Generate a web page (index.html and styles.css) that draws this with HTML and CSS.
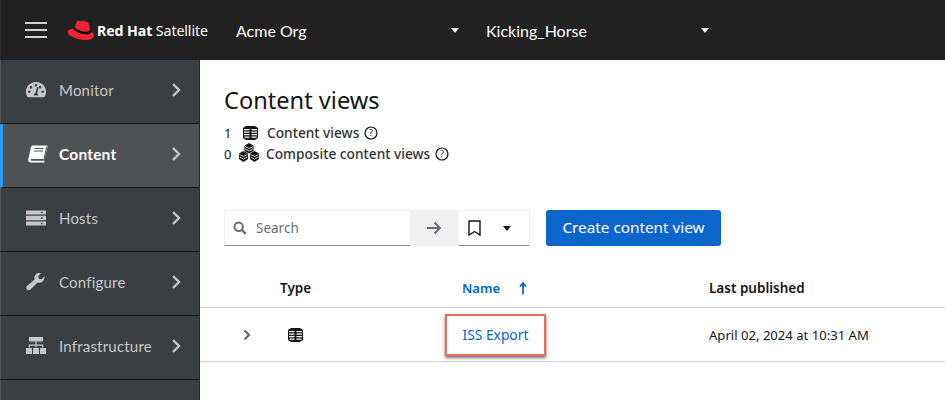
FILE: index.html
```html
<!DOCTYPE html>
<html lang="en">
<head>
    <meta charset="UTF-8">
    <title>Content views</title>
    <link rel="stylesheet" href="styles.css">
</head>
<body>
    <header class="topbar">
        <div class="burger"><span></span><span></span><span></span></div>
        <div class="logo">
            <svg class="logo-hat" width="27" height="20" viewBox="0 0 27 20">
                <path fill="#ee2436" d="M6.500 8.500C3 9 .5 10 .5 12 .5 15.500 10 20 18 20c6 0 9-2 9-4.500 0-2-2-3.500-3.500-4 .3 1.500-.5 3-3.500 3-6 0-12-3.500-13.500-6z"/>
                <path fill="#ee2436" d="M7.500 7.500l2-5C10 1 11 .5 12.500 1L14 1.500c1.500-1 3-1 5 0 2 .8 2.500 1.500 3 3.500l1 4.500c0 1.500-2 2-4 2-5 0-10-2-11.500-4z"/>
                <path fill="none" stroke="#000" stroke-width="1.800" d="M7 8c1.500 2.500 7 5.300 13 5.400 2.500 0 3.500-1.200 3.300-3"/>
            </svg>
            <span class="logo-text"><b>Red Hat</b> Satellite</span>
        </div>
        <div class="context org"><span>Acme Org</span><i class="caret"></i></div>
        <div class="context loc"><span>Kicking_Horse</span><i class="caret"></i></div>
    </header>

    <div class="layout">
        <nav class="sidebar">
            <a class="nav-item">
                <svg class="nav-icon" viewBox="0 0 20 18"><path fill="#c7c7c7" fill-rule="evenodd" d="M10 1C4.500 1 0 5.400 0 10.800c0 1.800.5 3.500 1.400 5 .2.300.5.400.8.400h15.600c.3 0 .6-.1.800-.4.900-1.500 1.400-3.200 1.400-5C20 5.400 15.500 1 10 1zM10 3a1.300 1.300 0 1 1 0 2.600A1.300 1.300 0 0 1 10 3zM3.300 12.100a1.300 1.300 0 1 1 0-2.600 1.300 1.300 0 0 1 0 2.600zM5 7.700a1.300 1.300 0 1 1 0-2.600 1.300 1.300 0 0 1 0 2.600zM12 14.500H8a2 2 0 0 1 1.400-2.400l1.600-5.600c.1-.5.600-.7 1-.6.500.1.700.6.600 1l-1.500 5.200c.6.500 1 1.400.9 2.400zM13.400 7.300a1.300 1.300 0 1 1 1.800-1.800 1.300 1.300 0 0 1-1.800 1.800zM16.700 12.100a1.300 1.300 0 1 1 0-2.600 1.300 1.300 0 0 1 0 2.600z"/></svg>
                <span class="nav-label">Monitor</span>
                <svg class="nav-arrow" viewBox="0 0 10 16"><path d="M2 2l6 6-6 6" fill="none" stroke="#c7c7c7" stroke-width="2.400"/></svg>
            </a>
            <a class="nav-item active">
                <svg class="nav-icon" viewBox="0 0 20 18"><path fill="#fff" d="M5 .5h13.500c.8 0 1.200.6 1 1.300l-2.700 11c-.2.800-.6 1.200-1.300 1.200H3.800c-1.400 0-1.400 1.800 0 1.800h12.700l-.2 1.700H2.800C.9 17.500-.1 16.300.2 14.800L3 2C3.300 1 4 .5 5 .5z"/><path fill="none" stroke="#4f5255" d="M6.500 3.500h9M6 6h9M18.800 1.500l-2.700 12"/></svg>
                <span class="nav-label">Content</span>
                <svg class="nav-arrow" viewBox="0 0 10 16"><path d="M2 2l6 6-6 6" fill="none" stroke="#c7c7c7" stroke-width="2.400"/></svg>
            </a>
            <a class="nav-item">
                <svg class="nav-icon" viewBox="0 0 20 18"><path fill="#c7c7c7" fill-rule="evenodd" d="M0 1.500h20v4H0zM15 2.800h1.500v1.400H15zM0 6.800h20v4.400H0zM15 8.300h1.500v1.400H15zM0 12.500h20v4H0zM15 13.800h1.500v1.400H15z"/></svg>
                <span class="nav-label">Hosts</span>
                <svg class="nav-arrow" viewBox="0 0 10 16"><path d="M2 2l6 6-6 6" fill="none" stroke="#c7c7c7" stroke-width="2.400"/></svg>
            </a>
            <a class="nav-item">
                <svg class="nav-icon" viewBox="0 0 20 18"><path fill="#c7c7c7" d="M18.500 3.200l-3 3-2.700-.5-.5-2.700 3-3c-2-.6-4.200 0-5.500 1.400-1.400 1.400-1.800 3.300-1.200 5.100L1 13.100c-1 1-1 2.500 0 3.500s2.500 1 3.500 0l7-7c1.800.6 3.800.1 5.200-1.200 1.400-1.400 1.900-3.400 1.800-5.200z"/></svg>
                <span class="nav-label">Configure</span>
                <svg class="nav-arrow" viewBox="0 0 10 16"><path d="M2 2l6 6-6 6" fill="none" stroke="#c7c7c7" stroke-width="2.400"/></svg>
            </a>
            <a class="nav-item">
                <svg class="nav-icon" viewBox="0 0 20 18"><path fill="#c7c7c7" d="M3 0h14v4.500H3zM9.400 4.500h1.200v3h6.600v3H16V8.700h-5.400v1.800H9.400V8.700H4v1.800H2.800v-3h6.600zM0 11h6v6H0zM7 11h6v6H7zM14 11h6v6h-6z"/></svg>
                <span class="nav-label">Infrastructure</span>
                <svg class="nav-arrow" viewBox="0 0 10 16"><path d="M2 2l6 6-6 6" fill="none" stroke="#c7c7c7" stroke-width="2.400"/></svg>
            </a>
        </nav>

        <main class="content">
            <h1>Content views</h1>
            <div class="stats">
                <div class="stat">
                    <span class="stat-num">1</span>
                    <svg class="stat-icon" width="15" height="14" viewBox="0 0 15 14"><path fill="#151515" fill-rule="evenodd" d="M3 0h9l3 2v10l-3 2H3l-3-2V2zM1 3v1.200h5.500V3zM8.500 3v1.200H14V3zM1 5.500v1.200h5.500V5.500zM8.500 5.500v1.200H14V5.500zM1 8v1.200h5.500V8zM8.500 8v1.200H14V8zM1.500 10.500v1.200h5v-1.200zM8.500 10.500v1.200h5v-1.200z"/></svg>
                    <span class="stat-label">Content views</span>
                    <svg class="help" width="14" height="14" viewBox="0 0 14 14"><circle cx="7" cy="7" r="6" fill="none" stroke="#151515" stroke-width="1.200"/><text x="7" y="10.300" text-anchor="middle" class="help-mark">?</text></svg>
                </div>
                <div class="stat">
                    <span class="stat-num">0</span>
                    <svg class="stat-icon" width="22" height="21" viewBox="0 0 22 21"><path fill="#151515" d="M6.500 2.500L11 0l4.500 2.500v5.500L11 10.500 6.500 8zM1 10.500L5.500 8 10 10.500V16l-4.500 3L1 16zM12 10.500L16.500 8l4.500 2.500V16l-4.500 3L12 16z"/><path fill="none" stroke="#fff" stroke-width=".8" d="M7 3.500l4 2 4-2M7 6l4 2 4-2M1.500 11.500l4 2 4-2M1.500 14l4 2 4-2M12.500 11.500l4 2 4-2M12.500 14l4 2 4-2"/></svg>
                    <span class="stat-label">Composite content views</span>
                    <svg class="help" width="14" height="14" viewBox="0 0 14 14"><circle cx="7" cy="7" r="6" fill="none" stroke="#151515" stroke-width="1.200"/><text x="7" y="10.300" text-anchor="middle" class="help-mark">?</text></svg>
                </div>
            </div>

            <div class="toolbar">
                <div class="search">
                    <svg width="14" height="14" viewBox="0 0 14 14"><circle cx="5.700" cy="5.700" r="4.200" fill="none" stroke="#6a6e73" stroke-width="2"/><path d="M8.800 8.800l4 4" stroke="#6a6e73" stroke-width="2.400"/></svg>
                    <span>Search</span>
                </div>
                <div class="search-go">
                    <svg width="16" height="14" viewBox="0 0 16 14"><path d="M1 7h13M8.500 1.500L14 7l-5.500 5.500" fill="none" stroke="#6a6e73" stroke-width="2"/></svg>
                </div>
                <div class="bookmark">
                    <svg width="13" height="16" viewBox="0 0 13 16"><path d="M1 1h11v14l-5.500-3.500L1 15z" fill="none" stroke="#151515" stroke-width="1.400"/></svg>
                    <i class="caret dark"></i>
                </div>
                <button class="primary">Create content view</button>
            </div>

            <div class="row head">
                <div></div>
                <div class="cell-type">Type</div>
                <div class="cell-name sorted">Name <svg width="8" height="13" viewBox="0 0 8 13"><path d="M4 12.500V2M1 4.500L4 1l3 3.500" fill="none" stroke="#0066cc" stroke-width="1.700"/></svg></div>
                <div class="cell-date">Last published</div>
            </div>
            <div class="row body-row">
                <div class="cell-toggle"><svg width="8" height="12" viewBox="0 0 8 12"><path d="M1.500 1.500L6 6l-4.500 4.500" fill="none" stroke="#6a6e73" stroke-width="2.200"/></svg></div>
                <div class="cell-type"><svg width="15" height="14" viewBox="0 0 15 14"><path fill="#151515" fill-rule="evenodd" d="M3 0h9l3 2v10l-3 2H3l-3-2V2zM1 3v1.200h5.500V3zM8.500 3v1.200H14V3zM1 5.500v1.200h5.500V5.500zM8.500 5.500v1.200H14V5.500zM1 8v1.200h5.500V8zM8.500 8v1.200H14V8zM1.500 10.500v1.200h5v-1.200zM8.500 10.500v1.200h5v-1.200z"/></svg></div>
                <div class="cell-name"><a class="callout">ISS Export</a></div>
                <div class="cell-date plain">April 02, 2024 at 10:31 AM</div>
            </div>
        </main>
    </div>
</body>
</html>
```

FILE: styles.css
```css
* {
    box-sizing: border-box;
}

html, body {
    height: 100%;
}

body {
    margin: 0;
    font-family: "Noto Sans", "Open Sans", sans-serif;
    font-size: 14px;
    color: #151515;
    overflow: hidden;
}

.topbar {
    display: flex;
    align-items: center;
    height: 60px;
    background-color: #212121;
    color: #fff;
    border-left: 1px solid #2e2e2e;
}

.burger {
    display: flex;
    flex-direction: column;
    gap: 5px;
    width: 22px;
    margin-left: 24px;
}

.burger span {
    display: block;
    height: 2px;
    background-color: #d2d2d2;
}

.logo {
    display: flex;
    align-items: center;
    margin-left: 20px;
    width: 169px;
}

.logo-hat {
    margin-right: 3px;
}

.logo-text {
    font-size: 14.200px;
    letter-spacing: -.1px;
    white-space: nowrap;
}

.context {
    display: flex;
    align-items: center;
    justify-content: space-between;
    font-size: 16px;
    font-family: "Lato", sans-serif;
}

.org {
    width: 223px;
    margin-right: 27px;
}

.loc {
    width: 223px;
}

.caret {
    display: block;
    width: 0;
    height: 0;
    border-left: 4.500px solid transparent;
    border-right: 4.500px solid transparent;
    border-top: 5px solid #f0f0f0;
}

.caret.dark {
    border-top-color: #151515;
}

.layout {
    display: flex;
    height: 340px;
}

.sidebar {
    width: 200px;
    flex: none;
    background-color: #3c3f42;
    border-right: 1px solid #26282a;
    border-left: 1px solid #55585b;
}

.nav-item {
    display: flex;
    align-items: center;
    height: 64px;
    padding: 0 18px 4px 26px;
    margin-left: -1px;
    border-bottom: 1px solid #151515;
    color: #c7c7c7;
}

.nav-item.active {
    background-color: #4f5255;
    color: #fff;
    font-weight: 700;
    border-left: 3px solid #2b9af3;
    padding-left: 25px;
}

.nav-icon {
    width: 20px;
    height: 18px;
    flex: none;
}

.nav-label {
    flex: 1;
    margin-left: 13px;
    font-family: "Lato", sans-serif;
    font-size: 15px;
    letter-spacing: .2px;
}

.active .nav-label {
    margin-left: 11px;
    font-size: 15.500px;
}

.nav-arrow {
    width: 10px;
    height: 16px;
    flex: none;
}

.content {
    flex: 1;
}

h1 {
    margin: 24px 0 0 24px;
    font-family: "Noto Sans", sans-serif;
    font-size: 23.600px;
    font-weight: 400;
    line-height: 32px;
}

.stats {
    margin: 6px 0 0 24px;
    font-size: 13.700px;
}

.stat {
    display: flex;
    align-items: center;
    height: 21px;
}

.stat-num {
    width: 9px;
    font-size: 13px;
}

.stat-icon {
    margin-left: 10px;
}

.stat + .stat .stat-icon {
    margin-left: 5px;
    margin-right: -3px;
}

.stat-label {
    margin: 0 5px 0 9px;
    font-weight: 500;
    color: #333;
}

.help-mark {
    font-size: 9px;
    font-family: "Noto Sans", sans-serif;
    fill: #151515;
}

.toolbar {
    display: flex;
    align-items: stretch;
    height: 36px;
    margin: 46px 0 0 24px;
}

.search {
    display: flex;
    align-items: center;
    width: 186px;
    padding-left: 8px;
    border: 1px solid #f0f0f0;
    border-bottom-color: #8a8d90;
    border-right: 0;
    color: #6a6e73;
    font-size: 13.500px;
}

.search span {
    margin-left: 9px;
    margin-bottom: 1px;
}

.search-go {
    display: flex;
    align-items: center;
    justify-content: center;
    width: 49px;
    padding-right: 2px;
    background-color: #f0f0f0;
}

.bookmark {
    display: flex;
    align-items: center;
    justify-content: space-between;
    width: 71px;
    padding: 0 18px 0 9px;
    border: 1px solid #f0f0f0;
    border-bottom-color: #8a8d90;
    border-left: 0;
}

.primary {
    width: 175px;
    height: 36px;
    margin-left: 16px;
    padding-bottom: 3px;
    border: 0;
    border-radius: 3px;
    background-color: #0b66cc;
    color: #fff;
    font-family: "Noto Sans", sans-serif;
    font-size: 15.300px;
}

.row {
    display: grid;
    grid-template-columns: 80px 182px 247px 1fr;
    align-items: center;
    border-bottom: 1px solid #d2d2d2;
}

.head {
    height: 62px;
    padding-top: 23px;
    font-size: 13.500px;
    font-weight: 600;
}

.body-row {
    height: 54px;
    font-size: 13.100px;
}

.cell-toggle {
    padding-left: 43px;
    display: flex;
}

.cell-type svg {
    display: block;
    margin-left: 8px;
}

.sorted {
    display: flex;
    align-items: center;
    gap: 19px;
    font-size: 13px;
    color: #0066cc;
}

.callout {
    display: inline-block;
    margin-left: -17px;
    padding: 10px 15.500px;
    border: 2px solid #ef6a5f;
    box-shadow: 0 2px 3px rgba(0, 0, 0, .55);
    color: #0066cc;
    font-size: 13.800px;
    line-height: 18px;
}

.plain {
    color: #151515;
}
```
